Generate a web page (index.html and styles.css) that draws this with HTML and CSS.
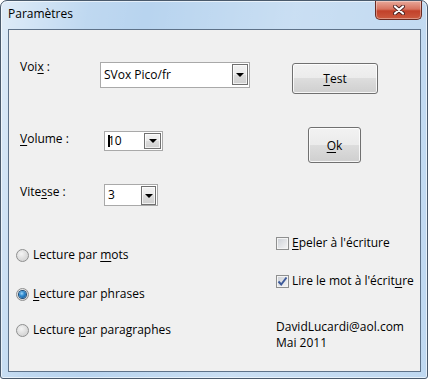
FILE: index.html
```html
<!DOCTYPE html>
<html lang="fr">
<head>
    <meta charset="UTF-8">
    <meta name="viewport" content="width=device-width, initial-scale=1.0">
    <title>Paramètres</title>
    <link rel="stylesheet" href="styles.css">
</head>
<body>
    <div class="window">
        <div class="titlebar">
            <span class="title">Paramètres</span>
            <button class="close-btn" aria-label="Fermer">
                <svg width="12" height="10" viewBox="0 0 12 10">
                    <path d="M2 1.5 L10 8.5 M10 1.5 L2 8.5" stroke="#4a2020" stroke-width="4" stroke-linecap="round"/>
                    <path d="M2 1.5 L10 8.5 M10 1.5 L2 8.5" stroke="#ffffff" stroke-width="2.2" stroke-linecap="round"/>
                </svg>
            </button>
        </div>
        <main class="client">
            <div class="col-left">
                <div class="field field-voix">
                    <span class="field-label">Voi<u>x</u> :</span>
                    <div class="combo combo-voix">
                        <span class="combo-text">SVox Pico/fr</span>
                        <span class="combo-btn"></span>
                    </div>
                </div>
                <div class="field field-volume">
                    <span class="field-label wide"><u>V</u>olume :</span>
                    <div class="combo combo-volume">
                        <span class="combo-text"><span class="caret"></span>10</span>
                        <span class="combo-btn"></span>
                    </div>
                </div>
                <div class="field field-vitesse">
                    <span class="field-label wide">Vite<u>s</u>se :</span>
                    <div class="combo combo-vitesse">
                        <span class="combo-text">3</span>
                        <span class="combo-btn"></span>
                    </div>
                </div>
                <div class="radios">
                    <label class="radio radio-mots"><span class="radio-circle"></span><span>Lecture par <u>m</u>ots</span></label>
                    <label class="radio radio-phrases"><span class="radio-circle checked"></span><span><u>L</u>ecture par phrases</span></label>
                    <label class="radio radio-paragraphes"><span class="radio-circle"></span><span>Lecture <u>p</u>ar paragraphes</span></label>
                </div>
            </div>
            <div class="col-right">
                <button class="btn btn-test"><u>T</u>est</button>
                <button class="btn btn-ok"><u>O</u>k</button>
                <label class="check check-epeler"><span class="check-box"></span><span><u>E</u>peler à l'écriture</span></label>
                <label class="check check-lire">
                    <span class="check-box">
                        <svg width="11" height="11" viewBox="0 0 11 11"><path d="M1.5 5.5 L4.2 8.5 L9.5 1.5" fill="none" stroke="#3d5a9a" stroke-width="2"/></svg>
                    </span>
                    <span>Lire le mot à l'écrit<u>u</u>re</span>
                </label>
                <p class="credits">DavidLucardi@aol.com<br>Mai 2011</p>
            </div>
        </main>
    </div>
</body>
</html>
```

FILE: styles.css
```css
body {
    margin: 0;
    padding: 0;
    font-family: "Open Sans", "Noto Sans", sans-serif;
    font-size: 12px;
    color: #000;
    background: #fff;
}

u {
    text-decoration-thickness: 1px;
    text-underline-offset: 2px;
}

.window {
    width: 428px;
    height: 379px;
    box-sizing: border-box;
    display: flex;
    flex-direction: column;
    padding: 0 6px 6px 8px;
    border: 1px solid #4a5a6c;
    border-radius: 7px 7px 3px 3px;
    background:
        linear-gradient(100deg, rgba(255, 255, 255, 0.55) 0%, rgba(255, 255, 255, 0.1) 18%, rgba(255, 255, 255, 0) 30%, rgba(255, 255, 255, 0.25) 60%, rgba(255, 255, 255, 0.1) 100%),
        #b8d4ef;
    box-shadow: inset 0 0 0 1px rgba(255, 255, 255, 0.6);
}

.titlebar {
    height: 28px;
    display: flex;
    align-items: flex-start;
    margin-left: -1px;
}

.title {
    line-height: 16px;
    padding-top: 5px;
    color: #000;
}

.close-btn {
    margin-left: auto;
    margin-right: -1px;
    width: 47px;
    height: 19px;
    padding: 0;
    display: flex;
    align-items: center;
    justify-content: center;
    border: 1px solid #6b2b22;
    border-top: none;
    border-radius: 0 0 5px 5px;
    background: linear-gradient(#e8a89a 0%, #d7735f 45%, #c2412a 55%, #cc5a3f 100%);
    box-shadow: inset 0 0 0 1px rgba(255, 255, 255, 0.35);
}

.client {
    flex: 1;
    display: flex;
    border: 1px solid #5e7289;
    background: #f0f0f0;
    margin-left: -1px;
}

.col-left {
    width: 251px;
    display: flex;
    flex-direction: column;
}

.col-right {
    flex: 1;
    display: flex;
    flex-direction: column;
    align-items: flex-start;
}

.field {
    display: flex;
    align-items: flex-start;
    padding-left: 11px;
}

.field-label {
    width: 80px;
    line-height: 16px;
    flex: none;
}

.field-label.wide {
    width: 84px;
}

.field-voix {
    margin-top: 29px;
}

.field-volume {
    margin-top: 43px;
}

.field-vitesse {
    margin-top: 33px;
}

.combo {
    display: flex;
    align-items: flex-start;
    justify-content: space-between;
    box-sizing: border-box;
    border: 1px solid #a9a9a9;
    background: #fff;
}

.combo-text {
    line-height: 16px;
    padding-left: 3px;
    display: flex;
    align-items: center;
}

.combo-voix {
    width: 150px;
    height: 26px;
    margin-top: 3px;
}

.combo-voix .combo-text {
    padding-top: 4px;
}

.combo-volume {
    width: 59px;
    height: 20px;
}

.combo-volume .combo-text {
    padding-top: 1px;
}

.combo-vitesse {
    width: 54px;
    height: 22px;
}

.combo-vitesse .combo-text {
    padding-top: 2px;
}

.caret {
    display: inline-block;
    width: 2px;
    height: 12px;
    margin-right: -2px;
    background: #000;
}

.combo-btn {
    flex: none;
    box-sizing: border-box;
    width: 16px;
    height: 21px;
    margin: 1px 1px 0 0;
    display: flex;
    align-items: center;
    justify-content: center;
    border: 1px solid #707070;
    background: linear-gradient(#f2f2f2 0%, #ebebeb 50%, #dddddd 50%, #cfcfcf 100%);
    box-shadow: inset 0 0 0 1px rgba(255, 255, 255, 0.7);
}

.combo-btn::after {
    content: "";
    border-left: 4px solid transparent;
    border-right: 4px solid transparent;
    border-top: 4px solid #000;
}

.combo-volume .combo-btn {
    width: 17px;
    height: 16px;
}

.combo-vitesse .combo-btn {
    width: 15px;
    height: 19px;
}

.radios {
    display: flex;
    flex-direction: column;
    padding-left: 7px;
}

.radio {
    display: flex;
    align-items: center;
    gap: 4px;
    line-height: 16px;
}

.radio-mots {
    margin-top: 41px;
}

.radio-phrases {
    margin-top: 23px;
}

.radio-paragraphes {
    margin-top: 20px;
}

.radio-circle {
    width: 13px;
    height: 13px;
    box-sizing: border-box;
    border-radius: 50%;
    border: 1px solid #8e8f8f;
    background: radial-gradient(circle at 40% 35%, #f4f4f4 0%, #dcdcdc 55%, #cfcfcf 100%);
    display: flex;
    align-items: center;
    justify-content: center;
}

.radio-circle.checked::after {
    content: "";
    width: 7px;
    height: 7px;
    border-radius: 50%;
    background: radial-gradient(circle at 40% 35%, #9fd6f8 0%, #2f8bd0 40%, #0d4a86 100%);
    box-shadow: 0 0 0 1px #1a4b78;
}

.btn {
    box-sizing: border-box;
    padding: 0;
    font-family: inherit;
    font-size: 12px;
    color: #000;
    border: 1px solid #707070;
    border-radius: 3px;
    background: linear-gradient(#f2f2f2 0%, #ebebeb 50%, #dddddd 50%, #cfcfcf 100%);
    box-shadow: inset 0 0 0 1px rgba(255, 255, 255, 0.8);
}

.btn-test {
    width: 86px;
    height: 31px;
    margin: 33px 0 0 32px;
}

.btn-ok {
    width: 53px;
    height: 36px;
    margin: 33px 0 0 48px;
}

.check {
    display: flex;
    align-items: center;
    gap: 3px;
    line-height: 16px;
    margin-left: 16px;
}

.check-epeler {
    margin-top: 72px;
}

.check-lire {
    margin-top: 22px;
}

.check-box {
    width: 13px;
    height: 13px;
    box-sizing: border-box;
    border: 1px solid #8e8f8f;
    background: linear-gradient(135deg, #cbcfd5 0%, #f6f6f6 100%);
    box-shadow: inset 0 0 0 1px #f4f4f4;
    display: flex;
    align-items: center;
    justify-content: center;
}

.check-box svg {
    display: block;
}

.credits {
    margin: 30px 0 0 16px;
    line-height: 16px;
}
```
